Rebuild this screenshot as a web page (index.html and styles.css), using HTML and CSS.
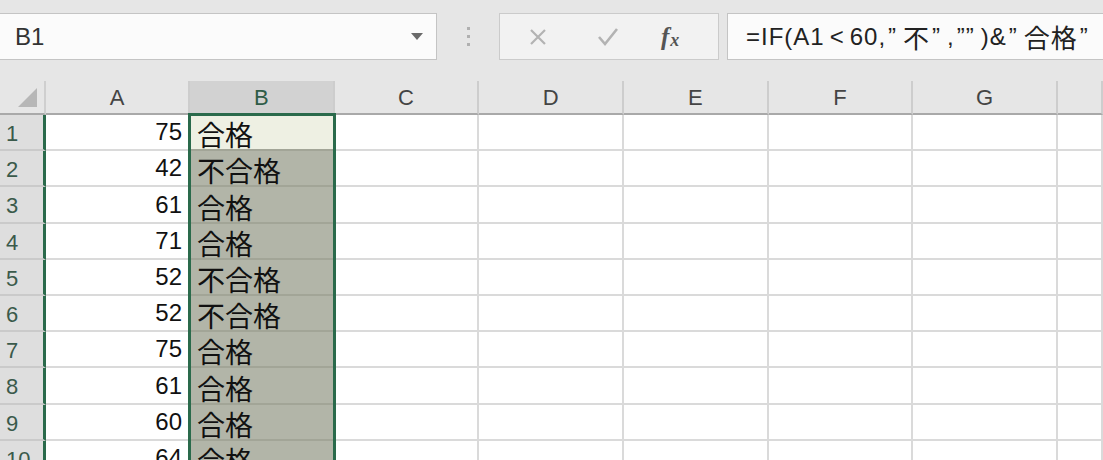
FILE: index.html
```html
<!DOCTYPE html>
<html>
  <head>
    <meta charset="utf-8">
    <title>Book1 - Excel</title>
    <link rel="stylesheet" href="styles.css">
  </head>
  <body>
    <div class="bar">
      <div class="namebox">
        <span class="ref">B1</span>
        <span class="drop"></span>
      </div>
      <div class="grip"><i></i><i></i><i></i></div>
      <div class="buttons">
        <svg class="btn" width="22" height="22" viewBox="0 0 22 22"><path d="M4 4 L18 18 M18 4 L4 18" stroke="#b3b3b3" stroke-width="2.2" fill="none"/></svg>
        <svg class="btn" width="24" height="22" viewBox="0 0 24 22"><path d="M3 11 L9 18 L21 3" stroke="#b3b3b3" stroke-width="2.6" fill="none"/></svg>
        <span class="fx">f<sub>x</sub></span>
      </div>
      <div class="formula">=IF(A1<span class="lt">&lt;</span>60,<span class="q">”</span><span class="ja">不</span><span class="q">”</span>,<span class="q">””</span>)&amp;<span class="q">”</span><span class="ja">合格</span><span class="q">”</span></div>
    </div>

    <div class="sheet">
      <div class="grid">
        <div class="corner"><span class="tri"></span></div>
        <div class="colhead">A</div>
        <div class="colhead sel">B</div>
        <div class="colhead">C</div>
        <div class="colhead">D</div>
        <div class="colhead">E</div>
        <div class="colhead">F</div>
        <div class="colhead">G</div>
        <div class="colhead"></div>

        <div class="rowhead">1</div><div class="cell num">75</div><div class="cell txt active">合格</div><div class="cell"></div><div class="cell"></div><div class="cell"></div><div class="cell"></div><div class="cell"></div><div class="cell"></div>
        <div class="rowhead">2</div><div class="cell num">42</div><div class="cell txt">不合格</div><div class="cell"></div><div class="cell"></div><div class="cell"></div><div class="cell"></div><div class="cell"></div><div class="cell"></div>
        <div class="rowhead">3</div><div class="cell num">61</div><div class="cell txt">合格</div><div class="cell"></div><div class="cell"></div><div class="cell"></div><div class="cell"></div><div class="cell"></div><div class="cell"></div>
        <div class="rowhead">4</div><div class="cell num">71</div><div class="cell txt">合格</div><div class="cell"></div><div class="cell"></div><div class="cell"></div><div class="cell"></div><div class="cell"></div><div class="cell"></div>
        <div class="rowhead">5</div><div class="cell num">52</div><div class="cell txt">不合格</div><div class="cell"></div><div class="cell"></div><div class="cell"></div><div class="cell"></div><div class="cell"></div><div class="cell"></div>
        <div class="rowhead">6</div><div class="cell num">52</div><div class="cell txt">不合格</div><div class="cell"></div><div class="cell"></div><div class="cell"></div><div class="cell"></div><div class="cell"></div><div class="cell"></div>
        <div class="rowhead">7</div><div class="cell num">75</div><div class="cell txt">合格</div><div class="cell"></div><div class="cell"></div><div class="cell"></div><div class="cell"></div><div class="cell"></div><div class="cell"></div>
        <div class="rowhead">8</div><div class="cell num">61</div><div class="cell txt">合格</div><div class="cell"></div><div class="cell"></div><div class="cell"></div><div class="cell"></div><div class="cell"></div><div class="cell"></div>
        <div class="rowhead">9</div><div class="cell num">60</div><div class="cell txt">合格</div><div class="cell"></div><div class="cell"></div><div class="cell"></div><div class="cell"></div><div class="cell"></div><div class="cell"></div>
        <div class="rowhead">10</div><div class="cell num">64</div><div class="cell txt">合格</div><div class="cell"></div><div class="cell"></div><div class="cell"></div><div class="cell"></div><div class="cell"></div><div class="cell"></div>
      </div>
      <div class="selection"></div>
    </div>
  </body>
</html>
```

FILE: styles.css
```css
* {
  box-sizing: border-box;
}
body {
  margin: 0;
  background: #e6e6e6;
  font-family: "Liberation Sans", "Noto Sans CJK JP", sans-serif;
  overflow: hidden;
  height: 460px;
}

/* formula bar */
.bar {
  display: flex;
  align-items: center;
  height: 81px;
  padding-bottom: 8px;
}
.namebox {
  width: 437px;
  height: 47px;
  background: #fbfbfb;
  border: 1px solid #c4c4c4;
  border-left: none;
  display: flex;
  align-items: center;
  justify-content: space-between;
  padding: 0 13px 0 15px;
}
.ref {
  font-size: 24px;
  color: #333;
}
.drop {
  width: 0;
  height: 0;
  border-left: 6px solid transparent;
  border-right: 6px solid transparent;
  border-top: 7px solid #6a6a6a;
}
.grip {
  width: 62px;
  display: flex;
  flex-direction: column;
  align-items: center;
  gap: 5px;
}
.grip i {
  width: 3px;
  height: 3px;
  background: #b0b0b0;
}
.buttons {
  width: 220px;
  height: 47px;
  background: #f2f2f2;
  border: 1px solid #cbcbcb;
  display: flex;
  align-items: center;
  padding-left: 27px;
  gap: 47px;
}
.fx {
  font-family: "Liberation Serif", serif;
  font-style: italic;
  font-weight: bold;
  font-size: 25px;
  color: #555;
  margin-left: -6px;
}
.fx sub {
  font-size: 18px;
  vertical-align: -1px;
  margin-left: 1px;
}
.formula {
  flex: 1;
  height: 47px;
  margin-left: 8px;
  background: #fbfbfb;
  border: 1px solid #c4c4c4;
  border-right: none;
  display: flex;
  align-items: center;
  padding-left: 18px;
  font-size: 24px;
  letter-spacing: 1px;
  color: #222;
  white-space: nowrap;
  overflow: hidden;
}
.formula .lt {
  margin: 0 5px;
}
.formula .q {
  margin: 0 6px 0 2px;
}
.formula .ja {
  font-family: "Noto Sans CJK JP", sans-serif;
  font-size: 26px;
  letter-spacing: 1px;
}

/* sheet grid */
.sheet {
  position: relative;
  height: 379px;
  overflow: hidden;
}
.grid {
  display: grid;
  grid-template-columns: 46px 144px repeat(6, 144.67px) 1fr;
  grid-template-rows: 34px repeat(10, 36.2px);
}
.corner {
  background: #e6e6e6;
  border-right: 2px solid #cfcfcf;
  border-bottom: 2px solid #a9a9a9;
  position: relative;
}
.tri {
  position: absolute;
  right: 7px;
  bottom: 6px;
  width: 0;
  height: 0;
  border-left: 19px solid transparent;
  border-bottom: 19px solid #b7b7b7;
}
.colhead {
  background: #e6e6e6;
  border-right: 2px solid #cdcdcd;
  border-bottom: 2px solid #a9a9a9;
  display: flex;
  align-items: center;
  justify-content: center;
  font-size: 22px;
  color: #444;
  padding-top: 2px;
}
.colhead.sel {
  background: #d2d2d2;
  color: #2f5c47;
}
.rowhead {
  background: #dedede;
  border-right: 3px solid #2a6a4b;
  border-bottom: 2px solid #cacaca;
  font-size: 22px;
  color: #3a5a4b;
  display: flex;
  align-items: center;
  padding: 4px 0 0 6px;
}
.cell {
  background: #fff;
  border-right: 2px solid #dadada;
  border-bottom: 2px solid #dadada;
  display: flex;
  align-items: flex-end;
  padding-bottom: 3px;
  font-size: 24px;
  color: #111;
  line-height: 1;
}
.cell.num {
  justify-content: flex-end;
  padding-right: 6px;
  padding-bottom: 5px;
}
.cell.txt {
  background: #b2b5a8;
  border-bottom-color: #a2a597;
  font-family: "Noto Sans CJK JP", sans-serif;
  font-size: 28px;
  padding-left: 7px;
  padding-bottom: 1px;
}
.cell.txt.active {
  background: #eef0e3;
}

/* column B selection frame */
.selection {
  position: absolute;
  left: 188px;
  top: 32px;
  width: 148px;
  height: 400px;
  border: 3px solid #2a6a4b;
  border-bottom: none;
  pointer-events: none;
}
```
